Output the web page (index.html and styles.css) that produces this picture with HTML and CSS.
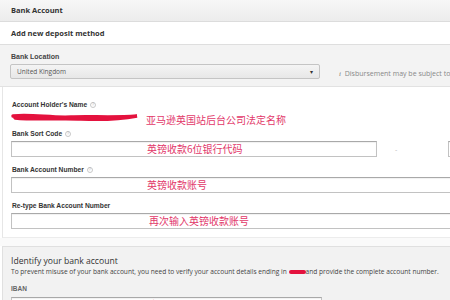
FILE: index.html
```html
<!DOCTYPE html>
<html>
<head>
<meta charset="utf-8">
<link rel="stylesheet" href="styles.css">
</head>
<body>
<div class="page">
  <div class="hdr">Bank Account</div>
  <div class="addrow">Add new deposit method</div>
  <div class="location">
    <div class="lbl">Bank Location</div>
    <div class="locrow">
      <div class="select"><span>United Kingdom</span><span class="arrow">&#9662;</span></div>
      <div class="info"><span class="ii">i</span> Disbursement may be subject to currency conversion</div>
    </div>
  </div>
  <div class="form">
    <div class="lbl">Account Holder's Name <span class="q">?</span></div>
    <div class="namerow">
      <svg class="scribble" width="128" height="10" viewBox="0 0 128 10"><path d="M2 4 C20 2 40 6 60 5 C80 4 100 6 126 4 C110 7 90 8 70 7 C50 6 25 8 4 6" fill="none" stroke="#e4123e" stroke-width="3.4" stroke-linecap="round"/></svg>
      <span class="red">亚马逊英国站后台公司法定名称</span>
    </div>
    <div class="lbl l2">Bank Sort Code <span class="q">?</span></div>
    <div class="sortrow">
      <div class="inp sort"><span class="red">英镑收款6位银行代码</span></div>
      <span class="dash">-</span>
      <div class="inp sort2"></div>
    </div>
    <div class="lbl l3">Bank Account Number <span class="q">?</span></div>
    <div class="inp wide"><span class="red">英镑收款账号</span></div>
    <div class="lbl l3">Re-type Bank Account Number</div>
    <div class="inp wide"><span class="red r4">再次输入英镑收款账号</span></div>
  </div>
  <div class="gap"></div>
  <div class="identify">
    <div class="title">Identify your bank account</div>
    <div class="desc">To prevent misuse of your bank account, you need to verify your account details ending in <span class="blot"></span>and provide the complete account number.</div>
    <div class="iban">IBAN</div>
    <div class="inp ibaninp"><span class="red">请输入注册英镑收款账号</span></div>
  </div>
</div>
</body>
</html>
```
FILE: styles.css
```css
* { box-sizing: border-box; }
html, body { margin: 0; padding: 0; }
body { width: 450px; height: 300px; overflow: hidden; background: #fff; font-family: "Open Sans", "Liberation Sans", sans-serif; color: #333; }
.page { width: 450px; }
.hdr { height: 22px; background: linear-gradient(#f7f7f7, #ececec); border-bottom: 1px solid #dcdcdc; font-size: 7.5px; font-weight: 700; line-height: 21px; padding-left: 11px; color: #333; }
.addrow { height: 23px; background: #fff; border-bottom: 1px solid #dedede; font-size: 7.5px; font-weight: 700; line-height: 22px; padding-left: 11px; }
.location { height: 42px; background: #f3f3f3; border-bottom: 1px solid #e2e2e2; padding: 7px 0 0 10px; overflow: hidden; }
.location .lbl { font-family: "Liberation Sans", sans-serif; font-size: 7px; font-weight: 700; color: #444; line-height: 10px; padding-left: 1px; margin-bottom: 2px; }
.locrow { display: flex; align-items: center; }
.select { flex: none; width: 310px; height: 15px; border: 1px solid #c4c4c4; border-radius: 2px; background: linear-gradient(#f4f4f4, #e7e7e7); display: flex; align-items: center; justify-content: space-between; padding: 0 6px 0 6px; font-size: 6.5px; color: #555; }
.arrow { font-size: 6px; color: #333; }
.info { flex: none; margin-left: 19px; font-size: 7px; color: #888; white-space: nowrap; margin-top: 3px; }
.ii { font-family: "Liberation Serif", serif; font-style: italic; color: #777; margin-right: 2px; }
.form { height: 151px; border-left: 1px solid #e6e6e6; margin-left: 2px; padding: 13px 0 0 8px; border-bottom: 1px solid #ececec; overflow: hidden; }
.lbl { font-family: "Liberation Sans", sans-serif; font-size: 6.7px; font-weight: 700; color: #333; line-height: 10px; padding-left: 1px; }
.q { display: inline-block; width: 6px; height: 6px; border-radius: 50%; border: 1px solid #c8c8c8; color: #bbb; font-size: 4.5px; line-height: 4px; text-align: center; vertical-align: 1px; margin-left: 1px; font-weight: 400; }
.namerow { display: flex; align-items: center; height: 14px; margin-top: 1px; }
.scribble { display: block; margin-top: -2px; flex: none; }
.red { font-family: "Noto Sans CJK SC", sans-serif; font-size: 10px; color: #e2386a; line-height: 12px; white-space: nowrap; }
.namerow .red { margin-left: 7px; margin-top: 3px; }
.l2 { margin-top: 4px; margin-bottom: 2px; }
.l3 { margin-top: 8px; margin-bottom: 2px; }
.sortrow { display: flex; align-items: center; }
.inp { flex: none; height: 16px; border: 1px solid #c2c2c2; border-top-color: #a9a9a9; background: #fff; box-shadow: inset 0 1px 1px rgba(0,0,0,0.06); display: flex; align-items: center; padding-left: 135px; }
.sort { width: 366px; }
.dash { flex: none; width: 71px; padding-left: 18px; color: #bbb; font-size: 7px; }
.sort2 { width: 20px; padding: 0; }
.wide { width: 460px; }
.r4 { margin-left: 2px; }
.gap { height: 8px; background: #fafafa; }
.identify { background: #f2f2f2; border-top: 1px solid #e0e0e0; border-left: 1px solid #e0e0e0; margin-left: 2px; padding: 8px 0 0 8px; height: 60px; }
.title { font-size: 8.6px; line-height: 12px; color: #333; }
.desc { font-size: 6.6px; line-height: 10px; color: #444; white-space: nowrap; }
.blot { display: inline-block; width: 17px; height: 4px; background: #e4123e; border-radius: 3px; vertical-align: middle; }
.iban { font-family: "Liberation Sans", sans-serif; font-size: 6.5px; font-weight: 700; color: #666; line-height: 10px; margin-top: 7px; }
.ibaninp { width: 311px; margin-top: 3px; padding-left: 135px; }
```
